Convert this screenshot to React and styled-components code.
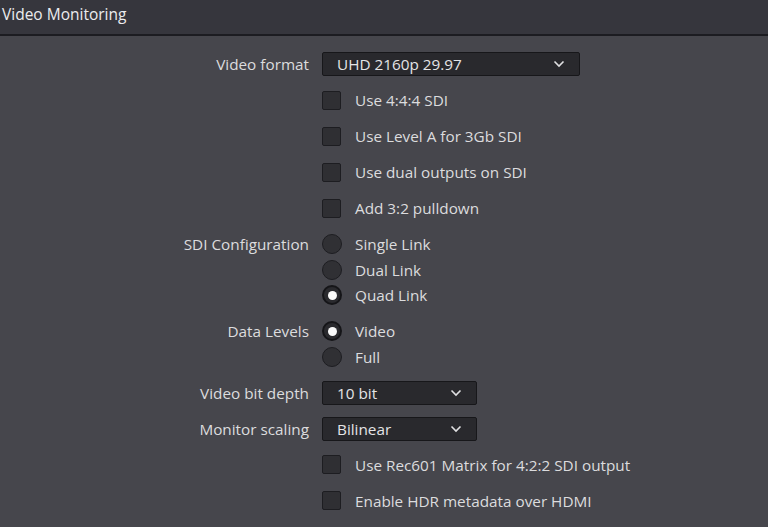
import React from 'react';
import styled, { createGlobalStyle } from 'styled-components';

const GlobalStyle = createGlobalStyle`
  html, body {
    margin: 0;
    padding: 0;
    background: #46464c;
  }
  body {
    font-family: "Open Sans", "Noto Sans", sans-serif;
    -webkit-font-smoothing: antialiased;
  }
`;

const Page = styled.div`
  width: 768px;
  height: 527px;
  overflow: hidden;
  background: #46464c;
  color: #dcdcde;
`;

const Header = styled.div`
  height: 34px;
  background: #36363d;
  border-bottom: 2px solid #1c1c21;
  display: flex;
  align-items: center;
  padding-left: 2px;
  font-size: 15.5px;
  color: #ececee;
  line-height: 1;
  & > span {
    margin-top: -5px;
  }
`;

const Form = styled.div`
  display: grid;
  grid-template-columns: 309px 1fr;
  column-gap: 13px;
  padding-top: 10px;
`;

const Label = styled.div`
  text-align: right;
  font-size: 15.3px;
  line-height: 26px;
  padding: 5px 0;
  white-space: nowrap;
`;

const Controls = styled.div`
  display: flex;
  flex-direction: column;
  padding: 5.25px 0;
`;

const Item = styled.div`
  height: 25.5px;
  display: flex;
  align-items: center;
  font-size: 15.3px;
  white-space: nowrap;
`;

const Select = styled.div`
  width: ${p => p.$width}px;
  height: 24px;
  box-sizing: border-box;
  background: #29292d;
  border: 1px solid #17171a;
  border-radius: 2px;
  display: flex;
  align-items: center;
  justify-content: space-between;
  padding: 0 14px 0 14px;
  color: #e4e4e6;
`;

const Box = styled.span`
  width: 19px;
  height: 19px;
  box-sizing: border-box;
  background: #2f2f33;
  border: 1px solid #1d1d21;
  border-radius: 2px;
  margin-right: 14px;
  flex-shrink: 0;
`;

const Radio = styled.span`
  width: 20px;
  height: 20px;
  box-sizing: border-box;
  border-radius: 50%;
  background: ${p => (p.$on ? '#2a2a2e' : '#303034')};
  border: ${p => (p.$on ? '2px solid #151518' : '1px solid #1d1d21')};
  margin-right: 13px;
  flex-shrink: 0;
  display: flex;
  align-items: center;
  justify-content: center;
  &::after {
    content: '';
    display: ${p => (p.$on ? 'block' : 'none')};
    width: 9px;
    height: 9px;
    border-radius: 50%;
    background: #fafafa;
  }
`;

const Chevron = () => (
  <svg width="12" height="8" viewBox="0 0 12 8">
    <path d="M1.5 1.5 L6 6 L10.5 1.5" fill="none" stroke="#e0e0e2" strokeWidth="1.6" />
  </svg>
);

const Row = ({ label, children }) => (
  <>
    <Label>{label}</Label>
    <Controls>{children}</Controls>
  </>
);

const Dropdown = ({ value, width }) => (
  <Item>
    <Select $width={width}>
      <span>{value}</span>
      <Chevron />
    </Select>
  </Item>
);

const Check = ({ children }) => (
  <Item>
    <Box />
    {children}
  </Item>
);

const Option = ({ on, children }) => (
  <Item>
    <Radio $on={on} />
    {children}
  </Item>
);

export default function App() {
  return (
    <>
      <GlobalStyle />
      <Page>
        <Header><span>Video Monitoring</span></Header>
        <Form>
          <Row label="Video format">
            <Dropdown value="UHD 2160p 29.97" width={258} />
          </Row>
          <Row><Check>Use 4:4:4 SDI</Check></Row>
          <Row><Check>Use Level A for 3Gb SDI</Check></Row>
          <Row><Check>Use dual outputs on SDI</Check></Row>
          <Row><Check>Add 3:2 pulldown</Check></Row>
          <Row label="SDI Configuration">
            <Option>Single Link</Option>
            <Option>Dual Link</Option>
            <Option on>Quad Link</Option>
          </Row>
          <Row label="Data Levels">
            <Option on>Video</Option>
            <Option>Full</Option>
          </Row>
          <Row label="Video bit depth">
            <Dropdown value="10 bit" width={155} />
          </Row>
          <Row label="Monitor scaling">
            <Dropdown value="Bilinear" width={155} />
          </Row>
          <Row><Check>Use Rec601 Matrix for 4:2:2 SDI output</Check></Row>
          <Row><Check>Enable HDR metadata over HDMI</Check></Row>
        </Form>
      </Page>
    </>
  );
}
